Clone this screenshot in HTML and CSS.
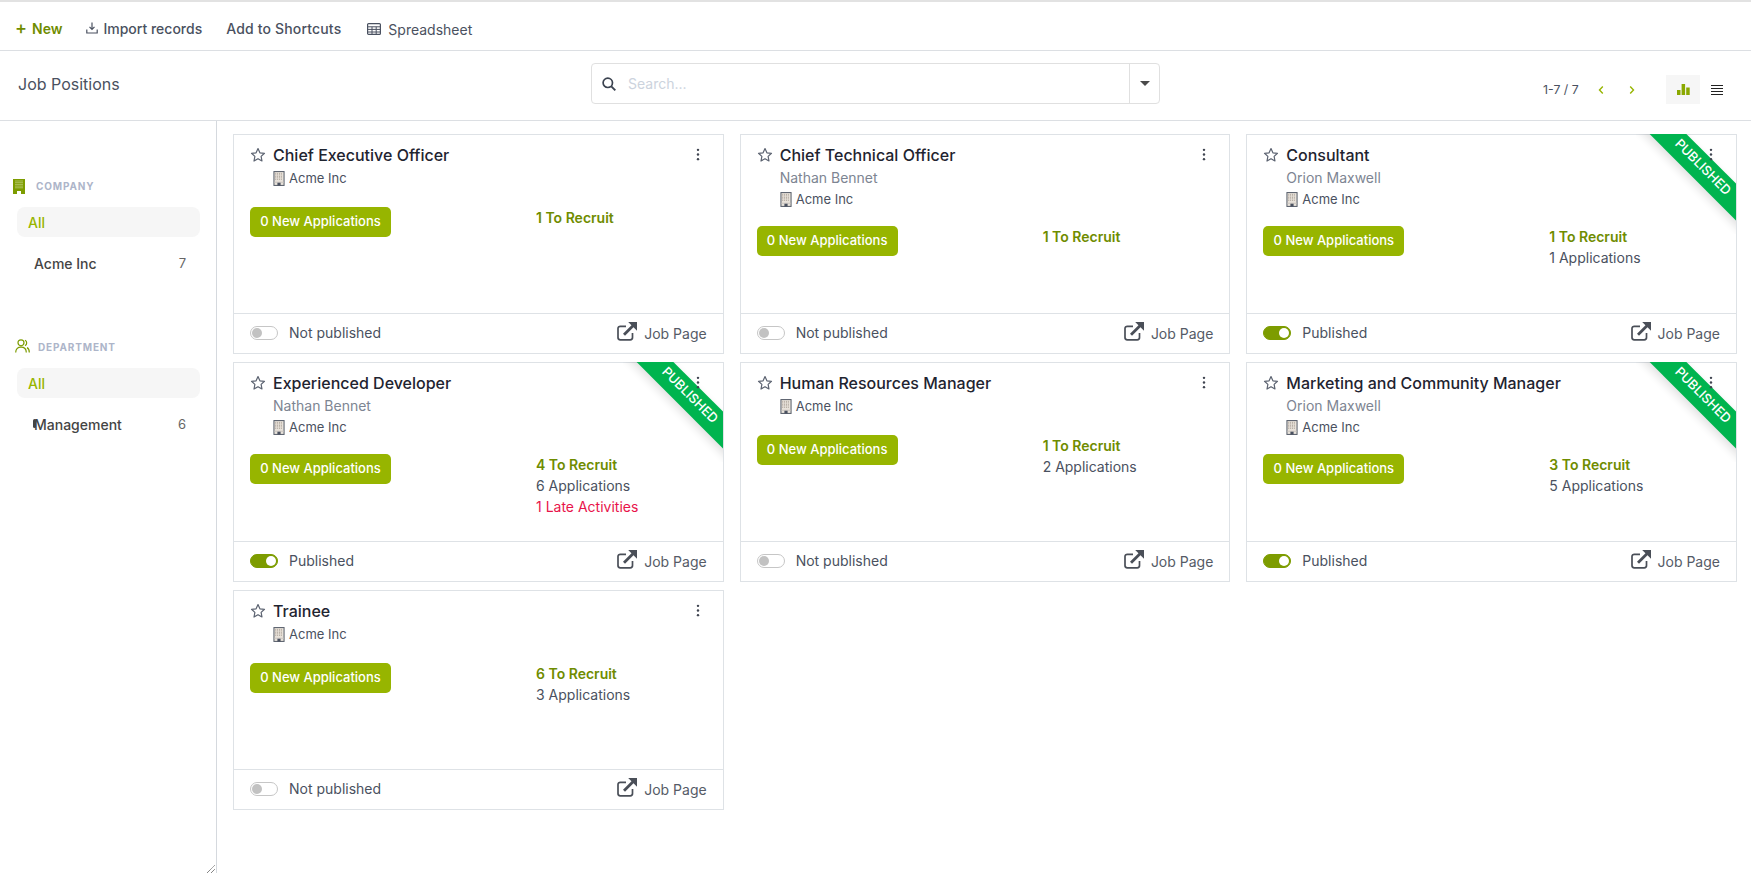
FILE: index.html
```html
<!DOCTYPE html>
<html lang="en">
<head>
<meta charset="utf-8">
<title>Job Positions</title>
<link rel="stylesheet" href="styles.css">
</head>
<body>
<svg class="defs" width="0" height="0" aria-hidden="true">
  <symbol id="star" viewBox="0 0 16 16"><path d="M8 1.6l1.9 4.2 4.6.5-3.4 3.1.9 4.6L8 11.7l-4 2.3.9-4.6L1.500 6.300l4.600-.5z" fill="none" stroke="currentColor" stroke-width="1.200" stroke-linejoin="round"/></symbol>
  <symbol id="kebab" viewBox="0 0 4 14"><circle cx="2" cy="2" r="1.300"/><circle cx="2" cy="7" r="1.300"/><circle cx="2" cy="12" r="1.300"/></symbol>
  <symbol id="building" viewBox="0 0 12 16"><rect x=".6" y=".6" width="10.800" height="14.800" fill="#e8e2da" stroke="#59606c" stroke-width="1.100"/><path d="M2.500 2v8M4.500 2v8M6.500 2v8M8.500 2v8" stroke="#a89e94" stroke-width="1" stroke-dasharray="1 .6"/><path d="M1 12h10" stroke="#c9c3be"/><rect x="4.300" y="12.500" width="3.400" height="3" fill="#4a5160"/></symbol>
  <symbol id="extlink" viewBox="0 0 20 19"><path d="M15.500 11v4.500a2.300 2.300 0 0 1-2.300 2.300H3.300A2.300 2.300 0 0 1 1 15.500V6.600a2.300 2.300 0 0 1 2.300-2.300H9" fill="none" stroke="currentColor" stroke-width="1.700"/><path d="M7 12.800L16.500 3.300" stroke="currentColor" stroke-width="2.800" fill="none"/><path d="M11.200 0H20v8.800z" fill="currentColor"/></symbol>
</svg>
<div class="app">
  <nav class="toolbar">
    <button class="tool tool-new"><span class="plus">+</span>New</button>
    <button class="tool"><svg class="ic-import" viewBox="0 0 12 12"><path d="M6 .5v6.500M3.500 4.800L6 7.300l2.500-2.500M.8 7.500v3.500h10.400V7.500" fill="none" stroke="currentColor" stroke-width="1.200"/></svg>Import records</button>
    <button class="tool tool-short">Add to Shortcuts</button>
    <button class="tool tool-sheet"><svg class="ic-sheet" viewBox="0 0 14 12"><rect x=".6" y=".6" width="12.800" height="10.800" rx="1" fill="none" stroke="currentColor" stroke-width="1.200"/><path d="M.6 3.800h12.800M.6 6.400h12.800M.6 9h12.800M5 3.800v7.600M9.200 3.800v7.600" stroke="currentColor" fill="none"/></svg>Spreadsheet</button>
  </nav>
  <header class="panel">
    <div class="panel-title">Job Positions</div>
    <div class="search">
      <svg class="ic-search" viewBox="0 0 14 14"><circle cx="5.800" cy="5.800" r="4.700" fill="none" stroke="currentColor" stroke-width="1.700"/><path d="M9.300 9.300l4 4" stroke="currentColor" stroke-width="1.900"/></svg>
      <span class="search-ph">Search...</span>
      <span class="search-drop"><i class="caret"></i></span>
    </div>
    <div class="panel-right">
      <span class="pager">1-7 / 7</span>
      <svg class="chev" viewBox="0 0 6 10"><path d="M4.800 1.500L1.500 5l3.300 3.500" fill="none" stroke="currentColor" stroke-width="1.400"/></svg>
      <svg class="chev chev-next" viewBox="0 0 6 10"><path d="M1.200 1.500L4.500 5 1.200 8.500" fill="none" stroke="currentColor" stroke-width="1.400"/></svg>
      <span class="view view-active"><svg class="ic-graph" viewBox="0 0 13 11"><rect y="6" width="3.500" height="5"/><rect x="4.600" width="3.500" height="11"/><rect x="9.200" y="3.500" width="3.500" height="7.500"/></svg></span>
      <span class="view"><svg class="ic-list" viewBox="0 0 12 10"><path d="M0 .5h12M0 3.500h12M0 6.500h12M0 9.500h12" stroke="currentColor"/></svg></span>
    </div>
  </header>
  <div class="content">
    <aside class="side">
      <section class="side-group group-company">
        <h3 class="side-head"><svg class="ic-co" viewBox="0 0 12 15"><rect width="12" height="15" fill="#7d9c00"/><path d="M3 1.500v8M5 1.500v8M7 1.500v8M9 1.500v8" stroke="#dfe6b8" stroke-dasharray="1 .7"/><rect x="4" y="12" width="4" height="3" fill="#fff"/></svg>COMPANY</h3>
        <div class="side-all">All</div>
        <div class="side-item"><span>Acme Inc</span><span class="side-count">7</span></div>
      </section>
      <section class="side-group group-dept">
        <h3 class="side-head head-dept"><svg class="ic-dept" viewBox="0 0 15 14"><circle cx="6" cy="3.800" r="3" fill="none" stroke="currentColor" stroke-width="1.200"/><path d="M.7 13.500c0-3.600 2.200-5.300 5.300-5.300s5.300 1.700 5.300 5.300M10 1.200a3 3 0 0 1 0 5.400M12 8.600c1.500.8 2.300 2.500 2.300 4.900" fill="none" stroke="currentColor" stroke-width="1.200"/></svg>DEPARTMENT</h3>
        <div class="side-all">All</div>
        <div class="side-item"><i class="side-mark"></i><span>Management</span><span class="side-count">6</span></div>
      </section>
      <svg class="grip" viewBox="0 0 8 8"><path d="M0 8L8 0M4 8l4-4" stroke="#555" stroke-dasharray="1 .6"/></svg>
    </aside>
    <main class="grid">

      <article class="card">
        <div class="card-body">
          <svg class="star"><use href="#star"/></svg>
          <svg class="kebab"><use href="#kebab"/></svg>
          <div class="head">
            <div class="title">Chief Executive Officer</div>
            <div class="company solo"><svg class="bld"><use href="#building"/></svg>Acme Inc</div>
          </div>
          <div class="stats">
            <div class="stat-l"><span class="btn-new">0 New Applications</span></div>
            <div class="stat-r"><div class="recruit">1 To Recruit</div></div>
          </div>
        </div>
        <div class="foot">
          <span class="toggle"></span><span class="pub">Not published</span>
          <span class="jobpage"><svg class="ext"><use href="#extlink"/></svg><span class="jp">Job Page</span></span>
        </div>
      </article>

      <article class="card">
        <div class="card-body">
          <svg class="star"><use href="#star"/></svg>
          <svg class="kebab"><use href="#kebab"/></svg>
          <div class="head">
            <div class="title">Chief Technical Officer</div>
            <div class="person">Nathan Bennet</div>
            <div class="company"><svg class="bld"><use href="#building"/></svg>Acme Inc</div>
          </div>
          <div class="stats">
            <div class="stat-l"><span class="btn-new">0 New Applications</span></div>
            <div class="stat-r"><div class="recruit">1 To Recruit</div></div>
          </div>
        </div>
        <div class="foot">
          <span class="toggle"></span><span class="pub">Not published</span>
          <span class="jobpage"><svg class="ext"><use href="#extlink"/></svg><span class="jp">Job Page</span></span>
        </div>
      </article>

      <article class="card">
        <div class="ribbon-box"><div class="ribbon">PUBLISHED</div></div>
        <div class="card-body">
          <svg class="star"><use href="#star"/></svg>
          <svg class="kebab"><use href="#kebab"/></svg>
          <div class="head">
            <div class="title">Consultant</div>
            <div class="person">Orion Maxwell</div>
            <div class="company"><svg class="bld"><use href="#building"/></svg>Acme Inc</div>
          </div>
          <div class="stats">
            <div class="stat-l"><span class="btn-new">0 New Applications</span></div>
            <div class="stat-r"><div class="recruit">1 To Recruit</div><div>1 Applications</div></div>
          </div>
        </div>
        <div class="foot">
          <span class="toggle on"></span><span class="pub">Published</span>
          <span class="jobpage"><svg class="ext"><use href="#extlink"/></svg><span class="jp">Job Page</span></span>
        </div>
      </article>

      <article class="card">
        <div class="ribbon-box"><div class="ribbon">PUBLISHED</div></div>
        <div class="card-body">
          <svg class="star"><use href="#star"/></svg>
          <svg class="kebab"><use href="#kebab"/></svg>
          <div class="head">
            <div class="title">Experienced Developer</div>
            <div class="person">Nathan Bennet</div>
            <div class="company"><svg class="bld"><use href="#building"/></svg>Acme Inc</div>
          </div>
          <div class="stats">
            <div class="stat-l"><span class="btn-new">0 New Applications</span></div>
            <div class="stat-r"><div class="recruit">4 To Recruit</div><div>6 Applications</div><div class="late">1 Late Activities</div></div>
          </div>
        </div>
        <div class="foot">
          <span class="toggle on"></span><span class="pub">Published</span>
          <span class="jobpage"><svg class="ext"><use href="#extlink"/></svg><span class="jp">Job Page</span></span>
        </div>
      </article>

      <article class="card">
        <div class="card-body">
          <svg class="star"><use href="#star"/></svg>
          <svg class="kebab"><use href="#kebab"/></svg>
          <div class="head">
            <div class="title">Human Resources Manager</div>
            <div class="company solo"><svg class="bld"><use href="#building"/></svg>Acme Inc</div>
          </div>
          <div class="stats">
            <div class="stat-l"><span class="btn-new">0 New Applications</span></div>
            <div class="stat-r"><div class="recruit">1 To Recruit</div><div>2 Applications</div></div>
          </div>
        </div>
        <div class="foot">
          <span class="toggle"></span><span class="pub">Not published</span>
          <span class="jobpage"><svg class="ext"><use href="#extlink"/></svg><span class="jp">Job Page</span></span>
        </div>
      </article>

      <article class="card">
        <div class="ribbon-box"><div class="ribbon">PUBLISHED</div></div>
        <div class="card-body">
          <svg class="star"><use href="#star"/></svg>
          <svg class="kebab"><use href="#kebab"/></svg>
          <div class="head">
            <div class="title">Marketing and Community Manager</div>
            <div class="person">Orion Maxwell</div>
            <div class="company"><svg class="bld"><use href="#building"/></svg>Acme Inc</div>
          </div>
          <div class="stats">
            <div class="stat-l"><span class="btn-new">0 New Applications</span></div>
            <div class="stat-r"><div class="recruit">3 To Recruit</div><div>5 Applications</div></div>
          </div>
        </div>
        <div class="foot">
          <span class="toggle on"></span><span class="pub">Published</span>
          <span class="jobpage"><svg class="ext"><use href="#extlink"/></svg><span class="jp">Job Page</span></span>
        </div>
      </article>

      <article class="card">
        <div class="card-body">
          <svg class="star"><use href="#star"/></svg>
          <svg class="kebab"><use href="#kebab"/></svg>
          <div class="head">
            <div class="title">Trainee</div>
            <div class="company solo"><svg class="bld"><use href="#building"/></svg>Acme Inc</div>
          </div>
          <div class="stats">
            <div class="stat-l"><span class="btn-new">0 New Applications</span></div>
            <div class="stat-r"><div class="recruit">6 To Recruit</div><div>3 Applications</div></div>
          </div>
        </div>
        <div class="foot">
          <span class="toggle"></span><span class="pub">Not published</span>
          <span class="jobpage"><svg class="ext"><use href="#extlink"/></svg><span class="jp">Job Page</span></span>
        </div>
      </article>

    </main>
  </div>
</div>
</body>
</html>
```

FILE: styles.css
```css
* { box-sizing: border-box; }
html, body { margin: 0; height: 100%; }
body { font-family: Inter, "Liberation Sans", sans-serif; font-size: 14px; color: #4a5160; background: #fff; overflow: hidden; }
.defs { position: absolute; }
.app { height: 873px; display: flex; flex-direction: column; border-top: 2px solid #e2e2e2; }

.toolbar { height: 49px; display: flex; align-items: center; padding: 4px 0 0 15px; border-bottom: 1px solid #dcdfe3; flex: none; }
.tool { border: 0; background: none; padding: 0; font: 500 14px Inter, sans-serif; color: #4a5160; display: flex; align-items: center; margin-right: 24px; }
.tool-new { color: #6f8c00; font-weight: 600; margin-right: 24px; }
.plus { width: 17px; font-size: 18px; font-weight: 500; line-height: 16px; text-align: left; }
.ic-import { width: 12px; height: 12px; margin-right: 5px; }
.tool-short { letter-spacing: .16px; }
.tool-sheet { font-weight: 400; margin-left: 2px; padding-top: 2px; }
.ic-sheet { width: 14px; height: 12px; margin-right: 7px; }

.panel { height: 70px; display: flex; align-items: center; padding: 0 0 4px 18px; border-bottom: 1px solid #dcdfe3; flex: none; position: relative; }
.panel-title { width: 573px; font-size: 16px; font-weight: 400; }
.search { width: 569px; height: 41px; border: 1px solid #e0e0e0; border-radius: 4px; display: flex; align-items: center; padding-left: 10px; }
.ic-search { width: 14px; height: 14px; color: #3b4350; }
.search-ph { flex: 1; margin-left: 12px; color: #ccd3dd; font-size: 14px; }
.search-drop { width: 30px; height: 100%; border-left: 1px solid #e0e0e0; display: flex; align-items: center; justify-content: center; }
.caret { border: 5px solid transparent; border-top: 5px solid #4a4a4a; border-bottom: 0; }
.panel-right { margin-left: auto; display: flex; align-items: center; padding-right: 17px; margin-top: 12px; }
.pager { font-size: 12.300px; width: 53px; }
.chev { width: 6px; height: 10px; color: #97b500; margin-left: 2px; }
.chev-next { margin-left: 25px; }
.view { width: 34px; height: 29px; display: flex; align-items: center; justify-content: center; }
.view-active { background: #f6f6f6; margin-left: 31px; }
.ic-graph { width: 13px; height: 11px; fill: #8aa800; }
.ic-list { width: 12px; height: 10px; color: #222; }

.content { flex: 1; display: flex; min-height: 0; }
.side { width: 217px; flex: none; border-right: 1px solid #d5d9de; position: relative; padding: 54px 16px 0 17px; }
.group-dept { margin-top: 58px; }
.side-head { margin: 0 0 10px -4px; height: 22px; display: flex; align-items: center; font-size: 10px; font-weight: 700; letter-spacing: .85px; color: #adb5c9; }
.head-dept { margin-left: -2px; }
.ic-co { width: 12px; height: 15px; margin-right: 11px; }
.ic-dept { width: 15px; height: 14px; color: #7d9c00; margin-right: 8px; margin-top: -2px; }
.side-all { height: 30px; border-radius: 8px; background: #f6f6f6; color: #97b500; font-weight: 500; line-height: 31px; padding-left: 11px; }
.side-item { display: flex; justify-content: space-between; height: 30px; margin-top: 11px; align-items: center; padding: 0 14px 0 17px; font-weight: 500; color: #444; position: relative; font-size: 14px; }
.side-count { font-weight: 400; font-size: 13px; color: #666; }
.side-mark { position: absolute; left: 16px; top: 10px; width: 3px; height: 9px; background: #444; border-radius: 2px; }
.grip { position: absolute; right: 1px; bottom: 0; width: 8px; height: 8px; }

.grid { flex: 1; display: grid; grid-template-columns: repeat(3, 1fr); grid-auto-rows: 220px; gap: 8px 16px; padding: 13px 14px 0 16px; align-content: start; }
.card { border: 1px solid #dee2e6; display: flex; flex-direction: column; position: relative; min-width: 0; }
.card-body { flex: 1; padding: 10px 16px 0 16px; position: relative; }
.star { position: absolute; left: 16px; top: 12px; width: 16px; height: 16px; color: #5b6270; }
.kebab { position: absolute; right: 23px; top: 13px; width: 4px; height: 13px; fill: #3f4450; z-index: 2; }
.head { padding-left: 23px; }
.title { font-size: 16px; font-weight: 500; color: #1f2430; line-height: 21px; }
.person { color: #7d8592; line-height: 21px; font-size: 14px; margin-top: 1px; }
.company { display: flex; align-items: center; font-size: 13px; line-height: 21px; margin-top: 1px; }
.company.solo { margin-top: 2px; padding-bottom: 2px; }
.bld { width: 12px; height: 15px; margin-right: 4px; }
.stats { display: flex; margin-top: 16px; }
.stat-l { width: 286px; flex: none; }
.stat-r { line-height: 21px; font-size: 14px; }
.btn-new { display: inline-block; width: 141px; height: 30px; border-radius: 5px; background: #97b500; color: #fff; font-size: 13px; font-weight: 500; line-height: 29px; text-align: center; }
.recruit { color: #6f8c00; font-weight: 600; }
.late { color: #e8134a; }

.foot { height: 40px; flex: none; border-top: 1px solid #dee2e6; display: flex; align-items: center; padding: 0 16px 2px; }
.toggle { width: 28px; height: 14px; border-radius: 7px; border: 1px solid #c6c6c6; position: relative; margin-right: 11px; }
.toggle::after { content: ""; position: absolute; left: 1px; top: 1px; width: 10px; height: 10px; border-radius: 50%; background: #c2c2c2; }
.toggle.on { background: #7d9c00; border-color: #7d9c00; }
.toggle.on::after { left: auto; right: 1px; background: #fff; }
.jobpage { margin-left: auto; display: flex; align-items: center; color: #555b66; }
.ext { width: 20px; height: 19px; margin-right: 7px; margin-top: -3px; color: #4a4f58; }
.jp { margin-top: 2px; }

.ribbon-box { position: absolute; top: -1px; right: 0; width: 100px; height: 100px; overflow: hidden; pointer-events: none; z-index: 1; }
.ribbon { position: absolute; top: 21px; right: -46px; width: 160px; height: 26px; transform: rotate(45deg); background: #00b44f; color: #fff; font-size: 13px; font-weight: 500; line-height: 23px; text-align: center; box-shadow: 0 4px 10px rgba(0,0,0,.12); }
```
